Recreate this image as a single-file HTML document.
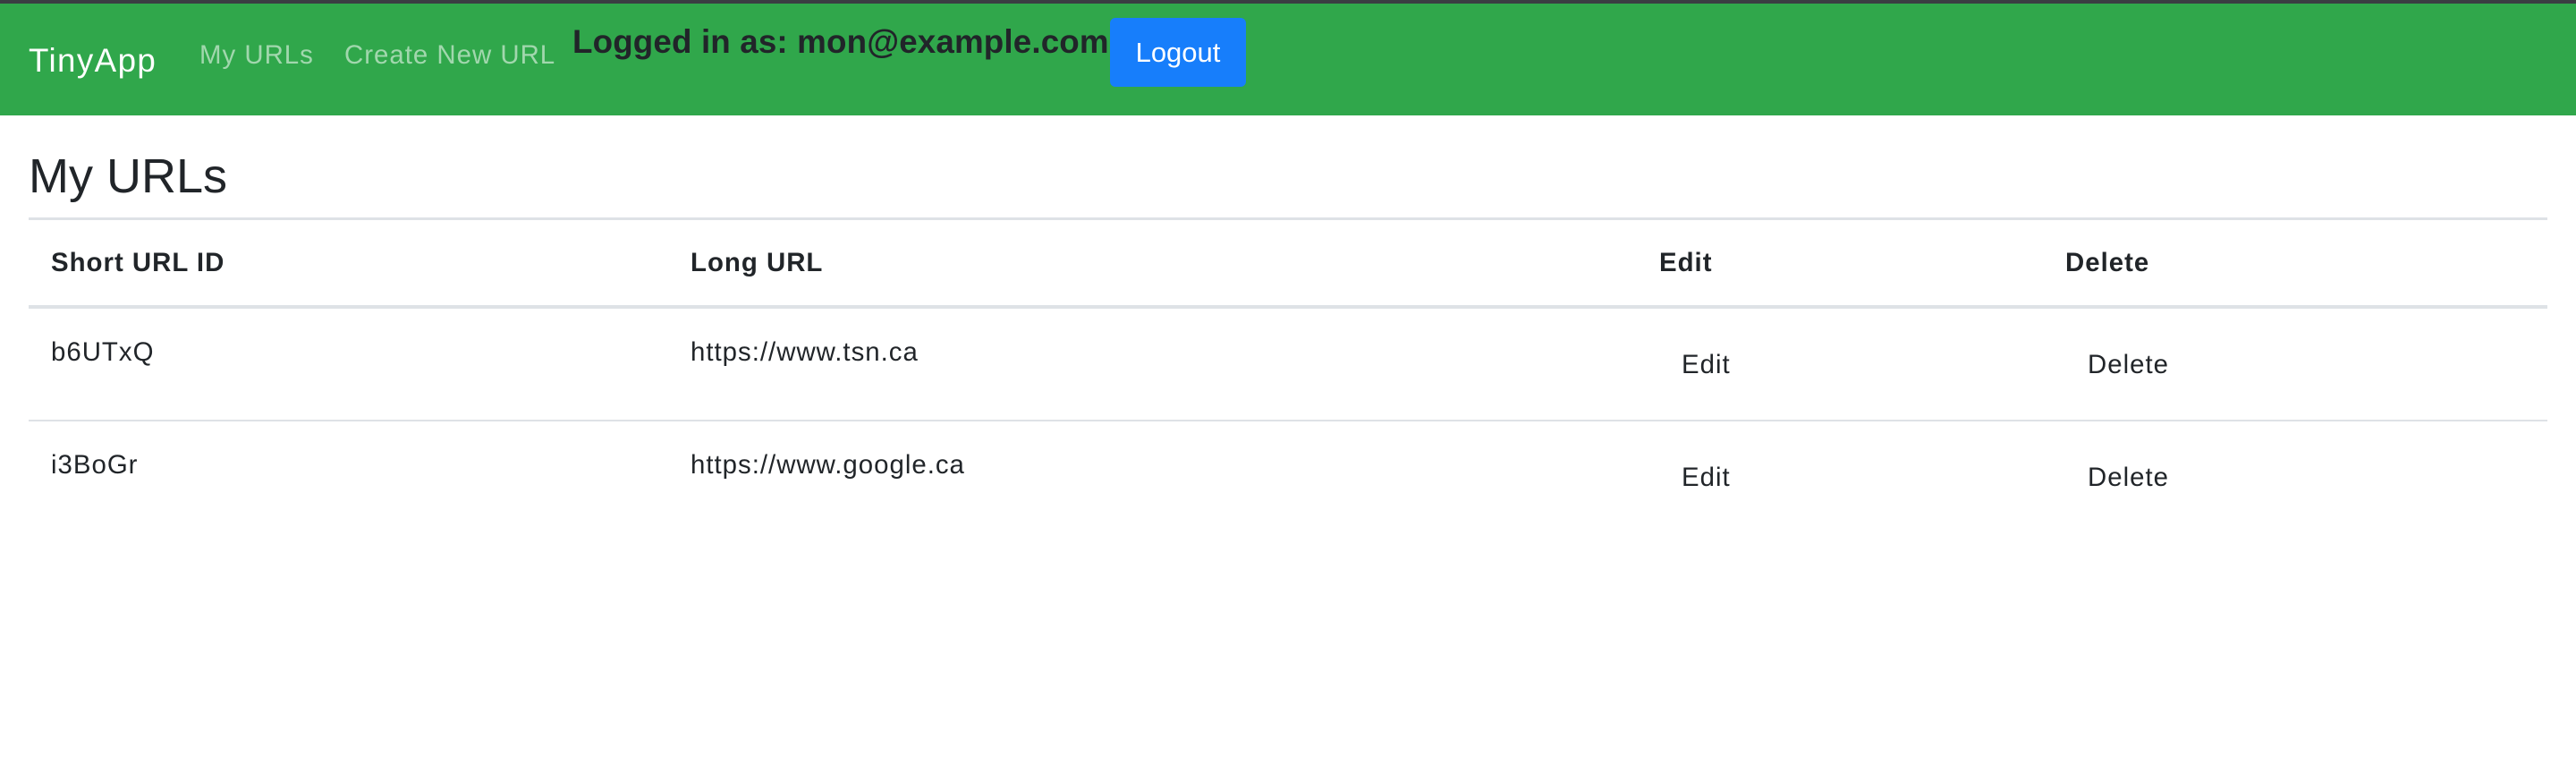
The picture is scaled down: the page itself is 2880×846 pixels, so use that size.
<!DOCTYPE html>
<html><head><meta charset="utf-8"><style>
*{margin:0;padding:0;box-sizing:border-box}
body{width:2880px;height:846px;background:#fff;position:relative;overflow:hidden;font-family:"Liberation Sans",sans-serif;color:#212529}
.a{position:absolute;line-height:1;white-space:nowrap}
.t{font-size:29.4px;letter-spacing:1px}
</style></head><body>
<div class="a" style="left:0;top:0;width:2880px;height:4px;background:#3a3d42"></div>
<div class="a" style="left:0;top:4px;width:2880px;height:125px;background:#30a74b"></div>
<div class="a" style="left:32px;top:50px;font-size:36.75px;color:#fff;letter-spacing:1.4px">TinyApp</div>
<div class="a" style="left:223px;top:47px;font-size:29.4px;color:rgba(255,255,255,.55);letter-spacing:1px">My URLs</div>
<div class="a" style="left:385px;top:47px;font-size:29.4px;color:rgba(255,255,255,.55);letter-spacing:1px">Create New URL</div>
<div class="a" style="left:640px;top:29px;font-size:36.75px;color:#212529;font-weight:bold;letter-spacing:0.15px">Logged in as: mon@example.com</div>
<div class="a" style="left:1241px;top:20px;width:152px;height:77px;background:#177efb;border-radius:6px;color:#fff;font-size:31px;display:flex;align-items:center;justify-content:center">Logout</div>
<div class="a" style="left:32px;top:170px;font-size:54px">My URLs</div>
<div class="a" style="left:32px;top:243px;width:2816px;height:3px;background:#dee2e6"></div>
<div class="a t" style="left:57px;top:279px;font-weight:bold">Short URL ID</div>
<div class="a t" style="left:772px;top:279px;font-weight:bold">Long URL</div>
<div class="a t" style="left:1855px;top:279px;font-weight:bold">Edit</div>
<div class="a t" style="left:2309px;top:279px;font-weight:bold">Delete</div>
<div class="a" style="left:32px;top:341px;width:2816px;height:4px;background:#dee2e6"></div>
<div class="a t" style="left:57px;top:379px">b6UTxQ</div>
<div class="a t" style="left:772px;top:379px">https://www.tsn.ca</div>
<div class="a t" style="left:1880px;top:393px">Edit</div>
<div class="a t" style="left:2334px;top:393px">Delete</div>
<div class="a" style="left:32px;top:469px;width:2816px;height:2px;background:#dee2e6"></div>
<div class="a t" style="left:57px;top:505px">i3BoGr</div>
<div class="a t" style="left:772px;top:505px">https://www.google.ca</div>
<div class="a t" style="left:1880px;top:519px">Edit</div>
<div class="a t" style="left:2334px;top:519px">Delete</div>
</body></html>
